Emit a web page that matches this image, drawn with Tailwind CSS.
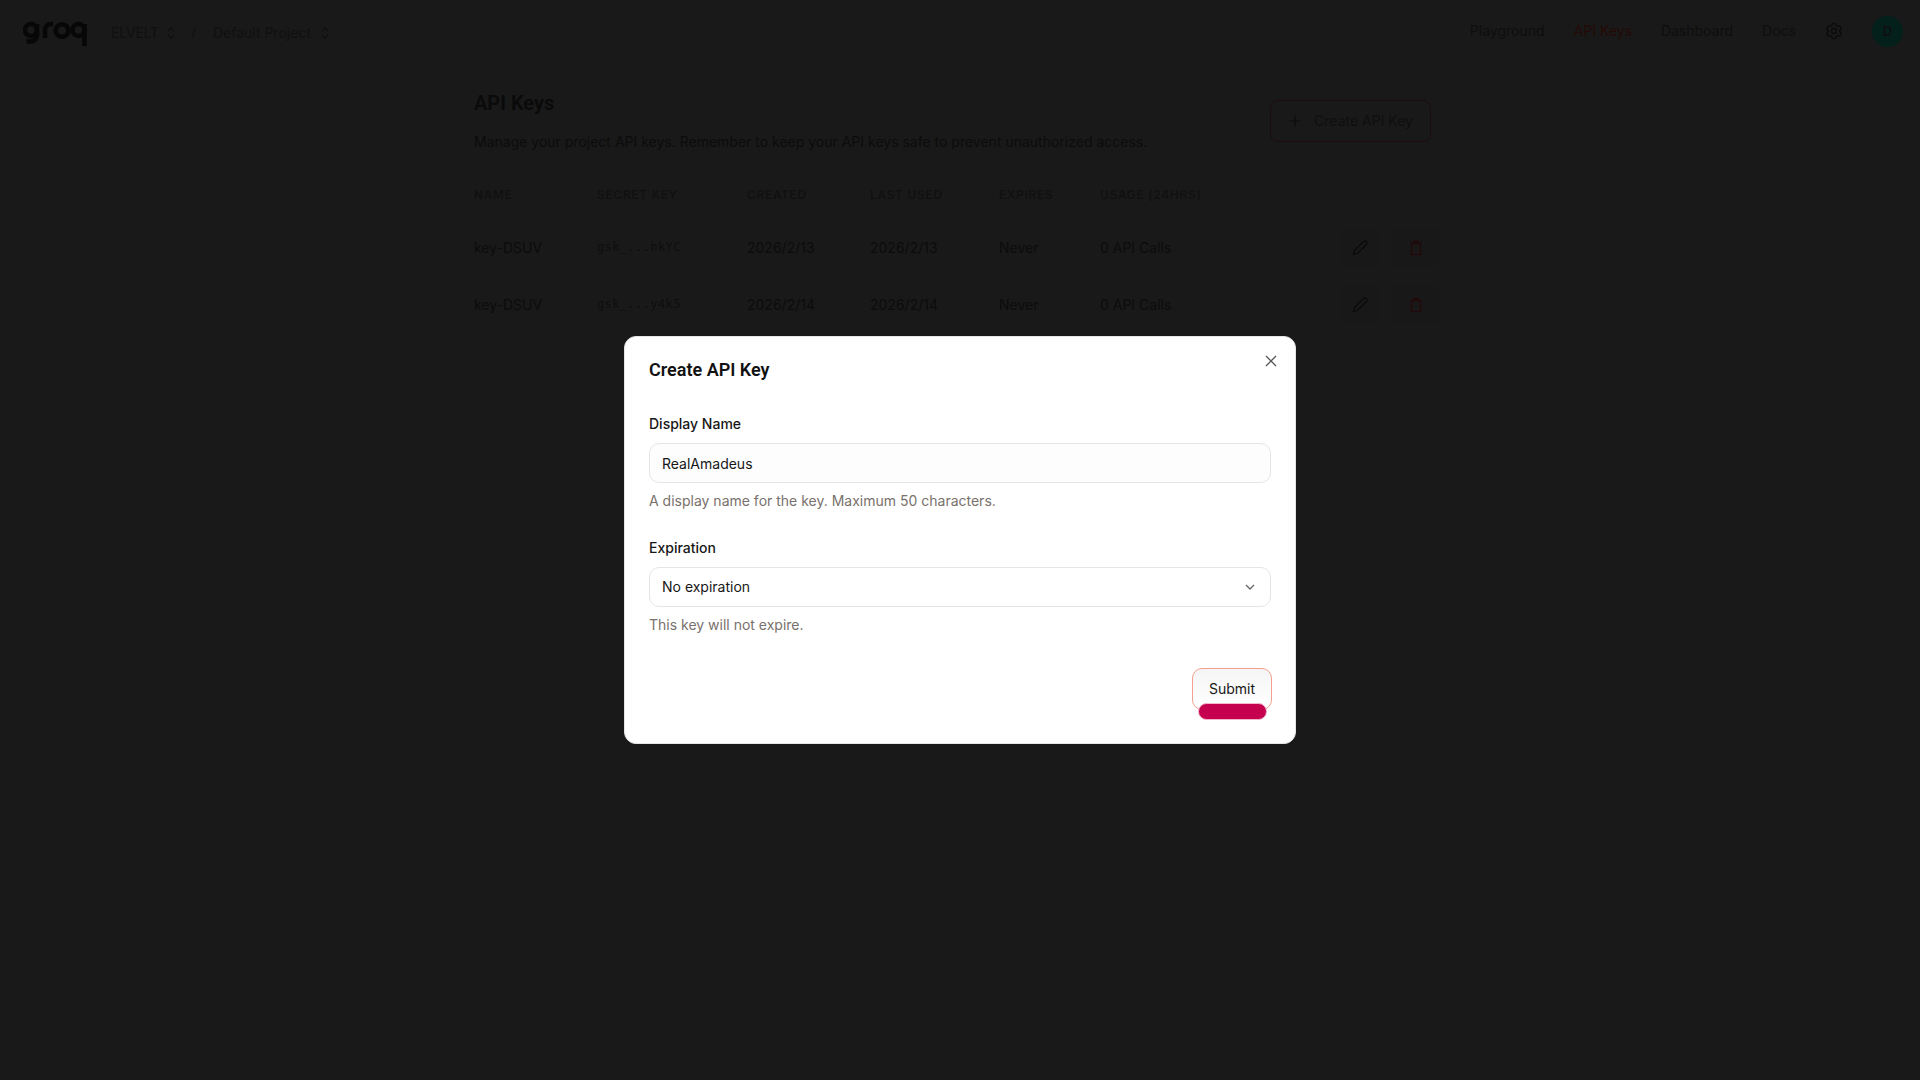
<!DOCTYPE html>
<html lang="en">
<head>
  <meta charset="UTF-8" />
  <meta name="viewport" content="width=device-width, initial-scale=1.0"/>
  <title>API Keys - GroqCloud</title>
  <script src="https://cdn.jsdelivr.net/npm/@tailwindcss/browser@4"></script>
</head>
<body class="bg-[#191919] min-h-screen font-['Inter',sans-serif] text-[#0d0d0d] text-sm overflow-hidden">

  <!-- Top bar -->
  <header class="h-[62px] flex items-center justify-between pl-[23px] pr-[17px]">
    <div class="flex items-center">
      <svg width="65" height="26" viewBox="0 0 65 26" fill="none" stroke="#070707" stroke-width="4.6" class="mt-[6px]">
        <circle cx="8" cy="9" r="6"/>
        <path d="M14 3v11a6.500 6.500 0 0 1-6.500 6.500H3.500"/>
        <path d="M22 17V9a6 6 0 0 1 6-6h2"/>
        <circle cx="39" cy="9.500" r="6.300"/>
        <circle cx="55.500" cy="9" r="6"/>
        <path d="M61.500 3v22"/>
      </svg>
      <div class="flex items-center mt-[4px]">
        <span class="ml-[23px] text-[#101010] text-[14px] tracking-[-0.2px]">ELVELT</span>
        <svg width="12" height="14" viewBox="0 0 12 14" fill="none" stroke="#101010" stroke-width="1.200" class="ml-[6px]">
          <path d="M3 5l3-3 3 3M3 9l3 3 3-3"/>
        </svg>
        <span class="ml-[14px] text-[#101010]">/</span>
        <span class="ml-[17px] text-[#101010] text-[14px]">Default Project</span>
        <svg width="12" height="14" viewBox="0 0 12 14" fill="none" stroke="#101010" stroke-width="1.200" class="ml-[8px]">
          <path d="M3 5l3-3 3 3M3 9l3 3 3-3"/>
        </svg>
      </div>
    </div>
    <nav class="flex items-center text-[14px] text-[#0e0e0e]">
      <a>Playground</a>
      <a class="ml-[29px] text-[#240a06]">API Keys</a>
      <a class="ml-[29px]">Dashboard</a>
      <a class="ml-[29px]">Docs</a>
      <svg xmlns="http://www.w3.org/2000/svg" width="20" height="20" fill="none" viewBox="0 0 24 24" stroke="#0c0c0c" stroke-width="1.800" class="ml-[28px]">
        <path stroke-linecap="round" stroke-linejoin="round" d="M9.594 3.940c.090-.542.560-.940 1.110-.940h2.593c.550 0 1.020.398 1.110.940l.213 1.281c.063.374.313.686.645.870.074.040.147.083.220.127.325.196.720.257 1.075.124l1.217-.456a1.125 1.125 0 0 1 1.370.490l1.296 2.247a1.125 1.125 0 0 1-.260 1.431l-1.003.827c-.293.241-.438.613-.430.992a7.723 7.723 0 0 1 0 .255c-.008.378.137.750.430.991l1.004.827c.424.350.534.955.260 1.430l-1.298 2.247a1.125 1.125 0 0 1-1.369.491l-1.217-.456c-.355-.133-.750-.072-1.076.124a6.470 6.470 0 0 1-.220.128c-.331.183-.581.495-.644.869l-.213 1.281c-.090.543-.560.940-1.110.940h-2.594c-.550 0-1.019-.398-1.110-.940l-.213-1.281c-.062-.374-.312-.686-.644-.870a6.520 6.520 0 0 1-.220-.127c-.325-.196-.720-.257-1.076-.124l-1.217.456a1.125 1.125 0 0 1-1.369-.490l-1.297-2.247a1.125 1.125 0 0 1 .260-1.431l1.004-.827c.292-.240.437-.613.430-.991a6.932 6.932 0 0 1 0-.255c.007-.380-.138-.751-.430-.992l-1.004-.827a1.125 1.125 0 0 1-.260-1.430l1.297-2.247a1.125 1.125 0 0 1 1.370-.491l1.216.456c.356.133.751.072 1.076-.124.072-.044.146-.086.220-.128.332-.183.582-.495.644-.869l.214-1.280Z"/>
        <path stroke-linecap="round" stroke-linejoin="round" d="M15 12a3 3 0 1 1-6 0 3 3 0 0 1 6 0Z"/>
      </svg>
      <div class="ml-[28px] w-[31px] h-[31px] rounded-full bg-[#03211a] flex items-center justify-center text-[#0f0f0f] text-[13px] font-semibold">D</div>
    </nav>
  </header>

  <!-- Page -->
  <main class="w-[972px] mx-auto">
    <div class="flex justify-between items-start pr-[15px]">
      <div>
        <h1 class="mt-[27px] text-[20px] leading-[28px] font-semibold text-[#0a0a0a] font-['Roboto',sans-serif]">API Keys</h1>
        <p class="mt-[15px] text-[14px] leading-[20px] text-[#0c0c0c]">Manage your project API keys. Remember to keep your API keys safe to prevent unauthorized access.</p>
      </div>
      <button class="mt-[38px] w-[161px] h-[42px] rounded-lg border border-[#200c0d] flex items-center justify-center gap-[12px] text-[14px] text-[#0f0f0f]">
        <svg width="14" height="14" viewBox="0 0 14 14" fill="none" stroke="#0d0d0d" stroke-width="1.200"><path d="M7 1.500v11M1.500 7h11"/></svg>
        Create API Key
      </button>
    </div>

    <div class="mt-[29px] grid grid-cols-[123px_150px_123px_129px_101px_1fr] h-[28px] items-center text-[12px] tracking-[0.7px] font-medium text-[#101010]">
      <span>NAME</span><span>SECRET KEY</span><span>CREATED</span><span>LAST USED</span><span>EXPIRES</span><span>USAGE (24HRS)</span>
    </div>

    <div class="mt-[10px] grid grid-cols-[123px_150px_123px_129px_101px_1fr_auto] h-[57px] items-center text-[14px] text-[#0c0c0c]">
      <span>key-DSUV</span>
      <span class="font-['DejaVu_Sans_Mono',monospace] text-[12px] text-[#0e0e0e] tracking-[0.4px]">gsk_...hkYC</span>
      <span>2026/2/13</span><span>2026/2/13</span><span>Never</span><span>0 API Calls</span>
      <div class="flex gap-[12px] pr-[7px]">
        <button class="w-[40px] h-[39px] rounded-lg bg-[#181818] flex items-center justify-center">
          <svg width="16" height="16" viewBox="0 0 16 16" fill="none" stroke="#0a0a0a" stroke-width="1.200"><path d="M1.500 14.500l1-4L11.500 1.500a1.400 1.400 0 0 1 3 3l-9 9z"/></svg>
        </button>
        <button class="w-[47px] h-[39px] rounded-lg bg-[#181818] flex items-center justify-center">
          <svg width="14" height="16" viewBox="0 0 14 16" fill="none" stroke="#220808" stroke-width="1.300"><path d="M1 3.500h12M2.500 3.500v11h9v-11M5 3.500V1.500h4v2"/></svg>
        </button>
      </div>
    </div>
    <div class="grid grid-cols-[123px_150px_123px_129px_101px_1fr_auto] h-[57px] items-center text-[14px] text-[#0c0c0c]">
      <span>key-DSUV</span>
      <span class="font-['DejaVu_Sans_Mono',monospace] text-[12px] text-[#0e0e0e] tracking-[0.4px]">gsk_...y4k5</span>
      <span>2026/2/14</span><span>2026/2/14</span><span>Never</span><span>0 API Calls</span>
      <div class="flex gap-[12px] pr-[7px]">
        <button class="w-[40px] h-[39px] rounded-lg bg-[#181818] flex items-center justify-center">
          <svg width="16" height="16" viewBox="0 0 16 16" fill="none" stroke="#0a0a0a" stroke-width="1.200"><path d="M1.500 14.500l1-4L11.500 1.500a1.400 1.400 0 0 1 3 3l-9 9z"/></svg>
        </button>
        <button class="w-[47px] h-[39px] rounded-lg bg-[#181818] flex items-center justify-center">
          <svg width="14" height="16" viewBox="0 0 14 16" fill="none" stroke="#220808" stroke-width="1.300"><path d="M1 3.500h12M2.500 3.500v11h9v-11M5 3.500V1.500h4v2"/></svg>
        </button>
      </div>
    </div>
  </main>

  <!-- Modal -->
  <div class="fixed inset-0 z-50 flex items-center justify-center">
    <div class="relative w-[672px] h-[408px] bg-white rounded-xl border border-[#e5e5e5] p-6 text-[#171717]">
      <button class="absolute top-[16px] right-[16px] text-[#555555]">
        <svg width="16" height="16" viewBox="0 0 16 16" fill="none" stroke="currentColor" stroke-width="1.300"><path d="M3 3l10 10M13 3L3 13"/></svg>
      </button>
      <h2 class="-mt-[1px] text-[18px] leading-[20px] font-semibold text-[#111111] font-['Roboto',sans-serif]">Create API Key</h2>

      <label class="block mt-[34px] text-[14px] leading-[20px] font-medium">Display Name</label>
      <input value="RealAmadeus" class="mt-[9px] w-full h-[40px] px-3 rounded-[10px] border border-[#e5e5e5] bg-[#fdfdfd] text-[14px] text-[#171717] outline-none" />
      <p class="mt-[8px] text-[14px] leading-[20px] text-[#78716c]">A display name for the key. Maximum 50 characters.</p>

      <label class="block mt-[27px] text-[14px] leading-[20px] font-medium">Expiration</label>
      <div class="mt-[9px] h-[40px] px-3 rounded-[10px] border border-[#e5e5e5] flex items-center justify-between text-[14px]">
        <span>No expiration</span>
        <svg width="16" height="16" viewBox="0 0 16 16" fill="none" stroke="#666666" stroke-width="1.300"><path d="M4 6l4 4 4-4"/></svg>
      </div>
      <p class="mt-[8px] text-[14px] leading-[20px] text-[#78716c]">This key will not expire.</p>

      <div class="absolute right-[23px] top-[331px]">
        <button class="w-[80px] h-[42px] rounded-[10px] border border-[#f4a08c] bg-linear-to-b from-[#f5f5f5] to-white text-[14px] text-[#171717]">Submit</button>
        <div class="absolute left-[6px] top-[35px] w-[69px] h-[17px] rounded-full bg-[#c4004f] border border-[#f3b6cc]"></div>
      </div>
    </div>
  </div>

</body>
</html>
